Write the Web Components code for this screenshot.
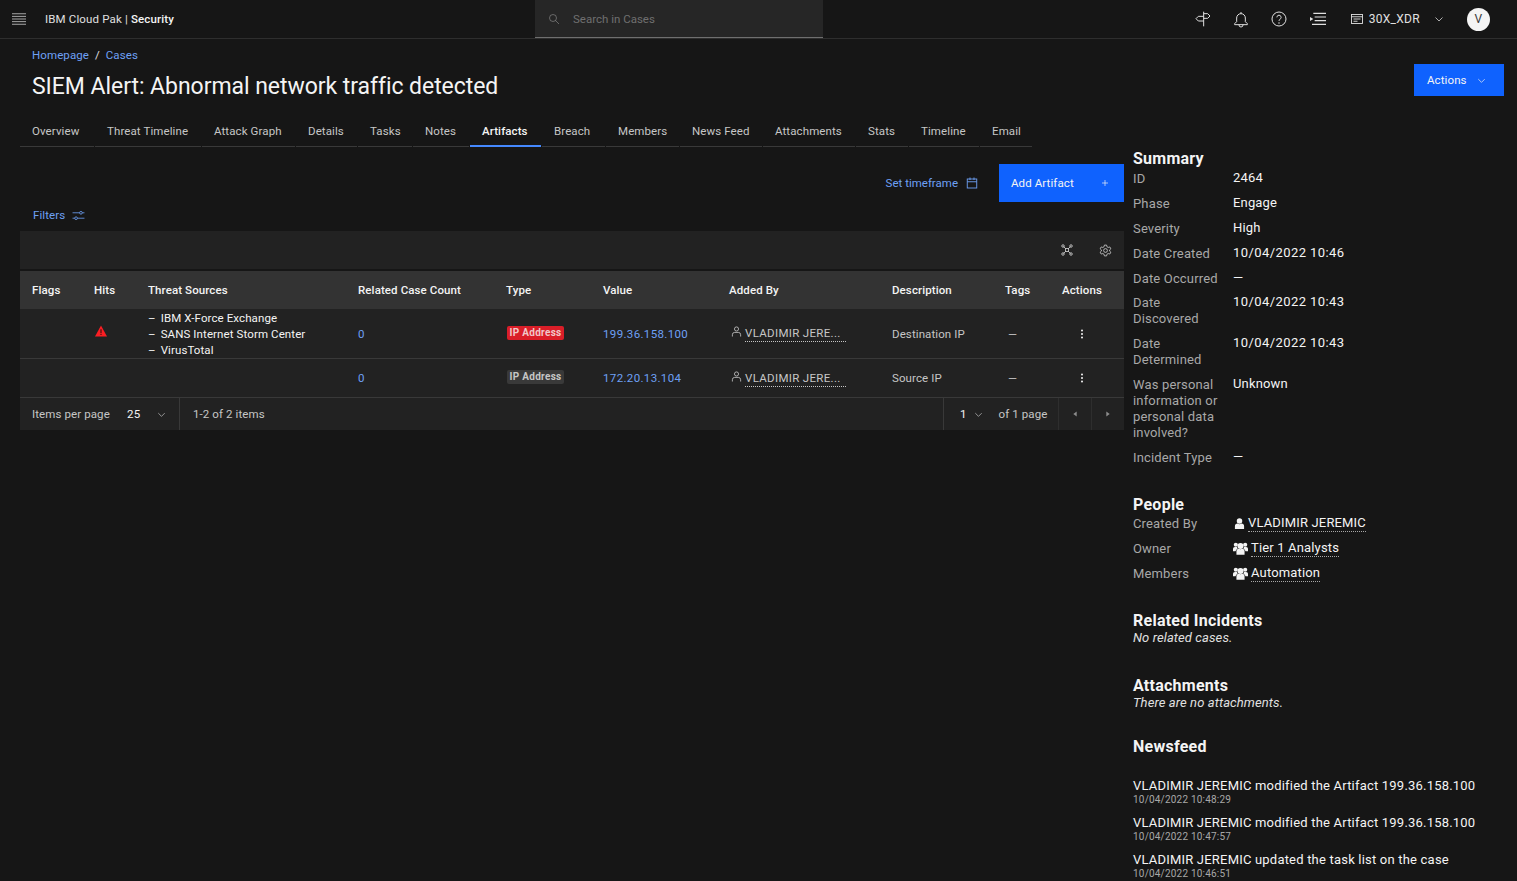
<!DOCTYPE html>
<html lang="en">
<head>
<meta charset="utf-8">
<title>SIEM Alert</title>
<style>
html, body { margin: 0; height: 100%; overflow: hidden; background: #161616; }
body { font-family: Roboto, "Liberation Sans", sans-serif; color: #f4f4f4; font-size: 12px; }
</style>
</head>
<body>
<case-page></case-page>

<script>
const ICONS = {
    menu: '<path d="M0 3h24M0 7.500h24M0 12h24M0 16.500h24M0 21h24" stroke-width="1.700"/>',
    search: '<circle cx="10" cy="10" r="7"/><path d="M15 15l7 7"/>',
    sign: '<path d="M13 1v22M13 4h6l3.500 3.500L19 11h-6M13 8H5l-3.500 3.500L5 15h8" stroke-width="1.500"/>',
    bell: '<path d="M12 1.500V4M5.500 16v-5.500a6.500 6.500 0 0 1 13 0V16l3 3v1.500h-19V19zM9 20.500v.5a3 3 0 0 0 6 0v-.5" stroke-width="1.500"/>',
    help: '<circle cx="12" cy="12" r="10.500" stroke-width="1.500"/><path d="M8.800 9.500a3.200 3.200 0 1 1 4.800 2.800c-1 .6-1.600 1.200-1.600 2.500" stroke-width="1.500"/><circle cx="12" cy="18" r="1.100" fill="currentColor" stroke="none"/>',
    panel: '<path d="M5 3.500h19M7 9h17M7 14.500h17M3 20h21" stroke-width="1.800"/><path d="M0 9l5 3-5 3z" fill="currentColor" stroke="none"/>',
    account: '<rect x="1" y="3" width="22" height="18" stroke-width="1.800"/><path d="M1 7.500h22M5 12h14M5 16.500h8" stroke-width="1.800"/>',
    chevron: '<path d="M5 9l7 7 7-7" stroke-width="1.500"/>',
    calendar: '<rect x="2.500" y="4" width="19" height="18" stroke-width="1.800"/><path d="M2.500 9.500h19M8 1v5M16 1v5" stroke-width="1.800"/>',
    plus: '<path d="M12 3v18M3 12h18" stroke-width="2"/>',
    sliders: '<path d="M1 7h13M19 7h4M1 17h4M10 17h13" stroke-width="1.500"/><circle cx="16.500" cy="7" r="2.500" stroke-width="1.500"/><circle cx="7.500" cy="17" r="2.500" stroke-width="1.500"/>',
    graph: '<path d="M5 5l5 5M19 5l-5 5M5 19l5-5M19 19l-5-5" stroke-width="1.800"/><rect x="9" y="9" width="6" height="6" stroke-width="1.800"/><circle cx="4" cy="4" r="2.500" stroke-width="1.800"/><circle cx="20" cy="4" r="2.500" stroke-width="1.800"/><circle cx="4" cy="20" r="2.500" stroke-width="1.800"/><circle cx="20" cy="20" r="2.500" stroke-width="1.800"/>',
    gear: '<path d="M10 2h4l.6 3 2.400 1.400 2.900-1 2 3.500-2.300 2v2.200l2.300 2-2 3.500-2.900-1-2.400 1.400-.6 3h-4l-.6-3L7 17.600l-2.900 1-2-3.500 2.300-2v-2.200l-2.300-2 2-3.500 2.900 1L9.400 5z" stroke-width="1.600"/><circle cx="12" cy="12" r="3.500" stroke-width="1.600"/>',
    person: '<circle cx="12" cy="6.500" r="4.500" stroke-width="1.800"/><path d="M3 23v-4a5 5 0 0 1 5-5h8a5 5 0 0 1 5 5v4" stroke-width="1.800"/>',
    user: '<circle cx="12" cy="6.500" r="6" fill="currentColor" stroke="none"/><path d="M2 24v-6a6 6 0 0 1 6-6 6 6 0 0 0 8 0 6 6 0 0 1 6 6v6z" fill="currentColor" stroke="none"/>',
    users: '<g fill="currentColor" stroke="none"><circle cx="12" cy="8" r="4.800"/><path d="M5.500 22v-5.500a4 4 0 0 1 4-4 5 5 0 0 0 5 0 4 4 0 0 1 4 4V22z"/><circle cx="4.500" cy="6" r="3.300"/><circle cx="19.500" cy="6" r="3.300"/><path d="M0 16.500v-4a3 3 0 0 1 3-3h3.500a6 6 0 0 0 1 3 6 6 0 0 0-3.500 4zM24 16.500v-4a3 3 0 0 0-3-3h-3.500a6 6 0 0 1-1 3 6 6 0 0 1 3.500 4z"/></g>',
    overflow: '<g fill="currentColor" stroke="none"><circle cx="12" cy="3.500" r="2.400"/><circle cx="12" cy="12" r="2.400"/><circle cx="12" cy="20.500" r="2.400"/></g>',
    caretLeft: '<path d="M16 6v12l-8-6z" fill="currentColor" stroke="none"/>',
    caretRight: '<path d="M8 6v12l8-6z" fill="currentColor" stroke="none"/>',
    alert: '<path d="M12 1 24 23H0z" fill="#fa1e23" stroke="none"/><path d="M12 8.500V16M12 17.500V20" stroke="#3a1112" stroke-width="2.200"/>',
};

class CaseIcon extends HTMLElement {
    connectedCallback() {
        const size = this.getAttribute('size') || 16;
        this.attachShadow({ mode: 'open' }).innerHTML = `
            <style>
            :host { display: inline-flex; flex: none; width: ${size}px; height: ${size}px; }
            svg { width: 100%; height: 100%; fill: none; stroke: currentColor; overflow: visible; }
            </style>
            <svg viewBox="0 0 24 24" aria-hidden="true">${ICONS[this.getAttribute('name')]}</svg>
        `;
    }
}

class AppHeader extends HTMLElement {
    constructor() {
        super();
        this.attachShadow({ mode: 'open' });
    }

    connectedCallback() {
        this.shadowRoot.innerHTML = `
            <style>
            :host {
                display: grid;
                grid-template-columns: 535px 288px 1fr;
                height: 38px;
                border-bottom: 1px solid #2e2e2e;
                color: #e0e0e0;
                letter-spacing: .15px;
                font-size: 11.500px;
            }
            .brand { display: flex; align-items: center; padding-left: 12px; gap: 19px; }
            .brand case-icon { color: #a8a8a8; }
            b { font-weight: 500; color: #f4f4f4; }
            .search {
                display: flex; align-items: center; gap: 13px; padding-left: 13px; letter-spacing: 0;
                background: #262626; border-bottom: 1px solid #6f6f6f; color: #6f6f6f;
            }
            .search case-icon { color: #a8a8a8; }
            .tools { display: flex; align-items: center; justify-content: flex-end; padding-right: 27px; }
            .tools > case-icon { margin-right: 22px; }
            .tools > .help { margin-right: 23px; }
            .tools > .last { margin-right: 25px; }
            .account { display: flex; align-items: center; font-size: 12px; letter-spacing: .3px; }
            .account span { margin: 0 13px 0 6px; }
            .avatar {
                display: flex; align-items: center; justify-content: center;
                width: 23px; height: 23px; margin-left: 22px; border-radius: 50%;
                background: #f4f4f4; color: #393939;
            }
            </style>
            <div class="brand"><case-icon name="menu" size="14"></case-icon><span>IBM Cloud Pak | <b>Security</b></span></div>
            <div class="search"><case-icon name="search" size="12"></case-icon><span>Search in Cases</span></div>
            <div class="tools">
                <case-icon name="sign" size="16"></case-icon>
                <case-icon name="bell" size="16"></case-icon>
                <case-icon class="help" name="help" size="16"></case-icon>
                <case-icon class="last" name="panel" size="16"></case-icon>
                <div class="account">
                    <case-icon name="account" size="12"></case-icon><span>30X_XDR</span>
                    <case-icon name="chevron" size="12"></case-icon>
                    <div class="avatar">V</div>
                </div>
            </div>
        `;
    }
}

class CaseTab extends HTMLElement {
    connectedCallback() {
        this.attachShadow({ mode: 'open' }).innerHTML = `
            <style>
            :host {
                display: block;
                padding: 7px 0 8px 12px;
                line-height: 14px;
                color: #c6c6c6;
                white-space: nowrap;
                border-bottom: 1px solid #393939;
                margin-right: 1px;
            }
            :host([active]) { color: #f4f4f4; font-weight: 500; border-bottom: 2px solid #4589ff; padding-bottom: 7px; }
            </style>
            <slot></slot>
        `;
    }
}

class CaseTabs extends HTMLElement {
    connectedCallback() {
        this.attachShadow({ mode: 'open' }).innerHTML = `
            <style>
            :host {
                display: grid;
                width: max-content;
                grid-template-columns: 75px 107px 94px 62px 55px 57px 72px 64px 74px 83px 93px 53px 71px 53px;
                font-size: 11.500px;
                letter-spacing: .1px;
            }
            </style>
            <slot></slot>
        `;
    }
}

class ArtifactRow extends HTMLElement {
    connectedCallback() {
        this.attachShadow({ mode: 'open' }).innerHTML = `
            <style>
            :host {
                display: grid;
                grid-template-columns: var(--artifact-cols);
                align-items: center;
                border-bottom: 1px solid #393939;
                background: #222;
                color: #c6c6c6;
                font-size: 11.500px;
                letter-spacing: .1px;
            }
            :host([head]) {
                height: 38px; background: #333; color: #f4f4f4; font-weight: 500; border-bottom: 0;
            }
            </style>
            <slot></slot>
        `;
    }
}

class ArtifactCell extends HTMLElement {
    connectedCallback() {
        this.attachShadow({ mode: 'open' }).innerHTML = `
            <style>
            :host { display: block; padding-left: 12px; min-width: 0; line-height: 16px; }
            :host([link]) { color: #6ea0f5; letter-spacing: .35px; }
            :host([light]) { color: #f4f4f4; }
            :host([dash]) { padding-left: 15px; }
            :host([center]) { padding: 0 10px 0 0; display: flex; justify-content: center; }
            </style>
            <slot></slot>
        `;
    }
}

class IpTag extends HTMLElement {
    connectedCallback() {
        this.attachShadow({ mode: 'open' }).innerHTML = `
            <style>
            :host {
                display: block; box-sizing: border-box; width: 57px; margin: -2px 0 0 1px;
                border-radius: 2px; line-height: 14px; text-align: center;
                font-size: 10px; font-weight: 700; letter-spacing: .3px;
                background: #393939; color: #c6c6c6;
            }
            :host([red]) { background: #da1e28; color: #f1c7c9; }
            </style>
            <slot></slot>
        `;
    }
}

class UserLink extends HTMLElement {
    connectedCallback() {
        this.attachShadow({ mode: 'open' }).innerHTML = `
            <style>
            :host { display: inline-flex; align-items: flex-start; gap: 3px; margin-left: 2px; }
            case-icon { margin-top: 1px; }
            span { border-bottom: 1px dotted #c6c6c6; width: 101px; white-space: nowrap; letter-spacing: .32px; }
            </style>
            <case-icon name="person" size="11"></case-icon><span><slot></slot></span>
        `;
    }
}

class ArtifactPager extends HTMLElement {
    connectedCallback() {
        this.attachShadow({ mode: 'open' }).innerHTML = `
            <style>
            :host {
                display: grid; grid-template-columns: 160px 1fr 115px 33px 33px; height: 32px; background: #222;
                color: #c6c6c6; font-size: 11.500px; letter-spacing: .1px;
            }
            div { display: flex; align-items: center; }
            .per { padding-left: 12px; border-right: 1px solid #393939; }
            .per span { width: 95px; flex: none; }
            .per b { font-weight: 400; color: #f4f4f4; width: 29px; flex: none; letter-spacing: .3px; }
            .count { padding-left: 13px; }
            .page { padding-left: 16px; border-left: 1px solid #393939; }
            .page b { font-weight: 400; color: #f4f4f4; margin-right: 6px; }
            .page span { margin-left: 15px; white-space: nowrap; }
            .step { justify-content: center; border-left: 1px solid #2e2e2e; color: #8d8d8d; }
            </style>
            <div class="per"><span>Items per page</span><b>25</b><case-icon name="chevron" size="11"></case-icon></div>
            <div class="count">1-2 of 2 items</div>
            <div class="page"><b>1</b><case-icon name="chevron" size="11"></case-icon><span>of 1 page</span></div>
            <div class="step"><case-icon name="caretLeft" size="10"></case-icon></div>
            <div class="step"><case-icon name="caretRight" size="10"></case-icon></div>
        `;
    }
}

class ArtifactTable extends HTMLElement {
    connectedCallback() {
        this.attachShadow({ mode: 'open' }).innerHTML = `
            <style>
            :host {
                display: block;
                --artifact-cols: 62px 54px 210px 148px 97px 126px 163px 113px 57px 74px;
            }
            .tools {
                display: flex; align-items: center; justify-content: flex-end; gap: 26px;
                height: 38px; padding-right: 12px; margin-bottom: 2px; background: #222; color: #c6c6c6;
            }
            ul { margin: 0; padding: 0; list-style: none; color: #f4f4f4; }
            li { display: flex; gap: 5px; }
            li::before { content: "–"; }
            .hit { padding-left: 13px; margin-top: -2px; }
            .first { height: 49px; }
            .second { height: 38px; }
            </style>
            <div class="tools"><case-icon name="graph" size="12"></case-icon><case-icon name="gear" size="13"></case-icon></div>
            <artifact-row head>
                <artifact-cell>Flags</artifact-cell><artifact-cell>Hits</artifact-cell><artifact-cell>Threat Sources</artifact-cell>
                <artifact-cell>Related Case Count</artifact-cell><artifact-cell>Type</artifact-cell><artifact-cell>Value</artifact-cell>
                <artifact-cell>Added By</artifact-cell><artifact-cell>Description</artifact-cell><artifact-cell>Tags</artifact-cell>
                <artifact-cell>Actions</artifact-cell>
            </artifact-row>
            <artifact-row class="first">
                <artifact-cell></artifact-cell>
                <artifact-cell class="hit"><case-icon name="alert" size="12"></case-icon></artifact-cell>
                <artifact-cell><ul><li>IBM X-Force Exchange</li><li>SANS Internet Storm Center</li><li>VirusTotal</li></ul></artifact-cell>
                <artifact-cell link>0</artifact-cell>
                <artifact-cell><ip-tag red>IP Address</ip-tag></artifact-cell>
                <artifact-cell link>199.36.158.100</artifact-cell>
                <artifact-cell><user-link>VLADIMIR JERE...</user-link></artifact-cell>
                <artifact-cell>Destination IP</artifact-cell>
                <artifact-cell dash>—</artifact-cell>
                <artifact-cell light center><case-icon name="overflow" size="10"></case-icon></artifact-cell>
            </artifact-row>
            <artifact-row class="second">
                <artifact-cell></artifact-cell><artifact-cell></artifact-cell><artifact-cell></artifact-cell>
                <artifact-cell link>0</artifact-cell>
                <artifact-cell><ip-tag>IP Address</ip-tag></artifact-cell>
                <artifact-cell link>172.20.13.104</artifact-cell>
                <artifact-cell><user-link>VLADIMIR JERE...</user-link></artifact-cell>
                <artifact-cell>Source IP</artifact-cell>
                <artifact-cell dash>—</artifact-cell>
                <artifact-cell light center><case-icon name="overflow" size="10"></case-icon></artifact-cell>
            </artifact-row>
            <artifact-pager></artifact-pager>
        `;
    }
}

class SideSection extends HTMLElement {
    connectedCallback() {
        this.attachShadow({ mode: 'open' }).innerHTML = `
            <style>
            :host { display: block; }
            h2 { margin: 0 0 var(--head-gap, 2px); font-size: 16px; line-height: 20px; font-weight: 700; color: #f4f4f4; letter-spacing: .25px; }
            </style>
            <h2>${this.getAttribute('heading')}</h2>
            <slot></slot>
        `;
    }
}

class SideRow extends HTMLElement {
    connectedCallback() {
        this.attachShadow({ mode: 'open' }).innerHTML = `
            <style>
            :host {
                display: grid; grid-template-columns: 100px 1fr; margin-bottom: 8.900px;
                font-size: 13px; line-height: 16px; letter-spacing: .16px;
            }
            :host([wide]) .value { letter-spacing: .42px; }
            .label { color: #a8a8a8; padding-right: 10px; }
            .value { color: #f4f4f4; margin-top: -1px; display: flex; align-items: center; height: max-content; }
            </style>
            <div class="label">${this.getAttribute('label')}</div>
            <div class="value"><slot></slot></div>
        `;
    }
}

class SideLink extends HTMLElement {
    connectedCallback() {
        const icon = this.getAttribute('icon');
        this.attachShadow({ mode: 'open' }).innerHTML = `
            <style>
            :host { display: inline-flex; align-items: center; gap: 3px; margin-left: ${icon === 'user' ? 1 : 0}px; }
            span { border-bottom: 1px dotted #a8a8a8; }
            </style>
            <case-icon name="${icon}" size="${icon === 'user' ? 11 : 15}"></case-icon><span><slot></slot></span>
        `;
    }
}

class NewsItem extends HTMLElement {
    connectedCallback() {
        this.attachShadow({ mode: 'open' }).innerHTML = `
            <style>
            :host { display: block; margin-bottom: 9px; }
            p { margin: 0; font-size: 13px; line-height: 16px; color: #f4f4f4; letter-spacing: .2px; white-space: nowrap; }
            small { display: block; font-size: 10px; line-height: 12px; color: #a8a8a8; letter-spacing: .2px; }
            </style>
            <p><slot></slot></p>
            <small>${this.getAttribute('date')}</small>
        `;
    }
}

class CaseSidebar extends HTMLElement {
    connectedCallback() {
        this.attachShadow({ mode: 'open' }).innerHTML = `
            <style>
            :host { display: block; width: 375px; padding-top: 32px; }
            em { display: block; font-size: 13px; line-height: 16px; color: #e0e0e0; letter-spacing: .1px; }
            .people { margin-top: 29px; --head-gap: 1px; }
            .related { margin-top: 29px; --head-gap: -1px; }
            .attach { margin-top: 30px; --head-gap: -1px; }
            .news { margin-top: 26px; --head-gap: 2px; }
            .news h3 { height: 19px; margin: 0; }
            </style>
            <side-section heading="Summary">
                <side-row label="ID">2464</side-row>
                <side-row label="Phase">Engage</side-row>
                <side-row label="Severity">High</side-row>
                <side-row wide label="Date Created">10/04/2022 10:46</side-row>
                <side-row label="Date Occurred">—</side-row>
                <side-row wide label="Date Discovered">10/04/2022 10:43</side-row>
                <side-row wide label="Date Determined">10/04/2022 10:43</side-row>
                <side-row label="Was personal information or personal data involved?">Unknown</side-row>
                <side-row label="Incident Type">—</side-row>
            </side-section>
            <side-section class="people" heading="People">
                <side-row label="Created By"><side-link icon="user">VLADIMIR JEREMIC</side-link></side-row>
                <side-row label="Owner"><side-link icon="users">Tier 1 Analysts</side-link></side-row>
                <side-row label="Members"><side-link icon="users">Automation</side-link></side-row>
            </side-section>
            <side-section class="related" heading="Related Incidents"><em>No related cases.</em></side-section>
            <side-section class="attach" heading="Attachments"><em>There are no attachments.</em></side-section>
            <side-section class="news" heading="Newsfeed">
                <h3></h3>
                <news-item date="10/04/2022 10:48:29">VLADIMIR JEREMIC modified the Artifact 199.36.158.100</news-item>
                <news-item date="10/04/2022 10:47:57">VLADIMIR JEREMIC modified the Artifact 199.36.158.100</news-item>
                <news-item date="10/04/2022 10:46:51">VLADIMIR JEREMIC updated the task list on the case</news-item>
            </side-section>
        `;
    }
}

class CasePage extends HTMLElement {
    connectedCallback() {
        this.attachShadow({ mode: 'open' }).innerHTML = `
            <style>
            :host { display: block; height: 881px; overflow: hidden; font-family: Roboto, 'Liberation Sans', sans-serif; }
            .head { display: flex; justify-content: space-between; padding: 0 13px 0 32px; height: 78px; }
            .crumbs { padding-top: 9px; line-height: 14px; font-size: 11.500px; letter-spacing: .1px; color: #e0e0e0; }
            .crumbs a { color: #6ea0f5; }
            .crumbs i { font-style: normal; margin: 0 3px; }
            h1 { margin: 10px 0 0; font-size: 23px; line-height: 30px; font-weight: 400; color: #f4f4f4; white-space: nowrap; letter-spacing: -.05px; }
            .btn {
                display: flex; align-items: center; box-sizing: border-box;
                background: #0f62fe; color: #f4f4f4; font-size: 11.500px; letter-spacing: .1px;
            }
            .head .btn { width: 90px; height: 32px; margin-top: 25px; padding: 0 17px 0 13px; justify-content: space-between; }
            .main { display: grid; grid-template-columns: 1104px 1fr; column-gap: 9px; padding-left: 20px; }
            .bar { display: flex; justify-content: flex-end; align-items: center; height: 38px; margin-top: 17px; color: #6ea0f5; font-size: 11.500px; }
            .bar .time { display: flex; align-items: center; gap: 8px; margin-right: 21px; }
            .bar .btn { width: 125px; height: 38px; padding: 0 15px 0 12px; justify-content: space-between; }
            .filters { display: flex; align-items: center; gap: 7px; height: 26px; padding: 0 0 3px 13px; color: #6ea0f5; font-size: 11.500px; letter-spacing: .1px; }
            </style>
            <app-header></app-header>
            <div class="head">
                <div>
                    <div class="crumbs"><a>Homepage</a> <i>/</i> <a>Cases</a></div>
                    <h1>SIEM Alert: Abnormal network traffic detected</h1>
                </div>
                <div class="btn">Actions <case-icon name="chevron" size="11"></case-icon></div>
            </div>
            <div class="main">
                <div>
                    <case-tabs>
                        <case-tab>Overview</case-tab><case-tab>Threat Timeline</case-tab><case-tab>Attack Graph</case-tab>
                        <case-tab>Details</case-tab><case-tab>Tasks</case-tab><case-tab>Notes</case-tab>
                        <case-tab active>Artifacts</case-tab><case-tab>Breach</case-tab><case-tab>Members</case-tab>
                        <case-tab>News Feed</case-tab><case-tab>Attachments</case-tab><case-tab>Stats</case-tab>
                        <case-tab>Timeline</case-tab><case-tab>Email</case-tab>
                    </case-tabs>
                    <div class="bar">
                        <div class="time">Set timeframe <case-icon name="calendar" size="12"></case-icon></div>
                        <div class="btn">Add Artifact <case-icon name="plus" size="8"></case-icon></div>
                    </div>
                    <div class="filters">Filters <case-icon name="sliders" size="13"></case-icon></div>
                    <artifact-table></artifact-table>
                </div>
                <case-sidebar></case-sidebar>
            </div>
        `;
    }
}

customElements.define('case-icon', CaseIcon);
customElements.define('app-header', AppHeader);
customElements.define('case-tab', CaseTab);
customElements.define('case-tabs', CaseTabs);
customElements.define('artifact-cell', ArtifactCell);
customElements.define('artifact-row', ArtifactRow);
customElements.define('ip-tag', IpTag);
customElements.define('user-link', UserLink);
customElements.define('artifact-pager', ArtifactPager);
customElements.define('artifact-table', ArtifactTable);
customElements.define('side-section', SideSection);
customElements.define('side-row', SideRow);
customElements.define('side-link', SideLink);
customElements.define('news-item', NewsItem);
customElements.define('case-sidebar', CaseSidebar);
customElements.define('case-page', CasePage);
</script>
</body>
</html>
